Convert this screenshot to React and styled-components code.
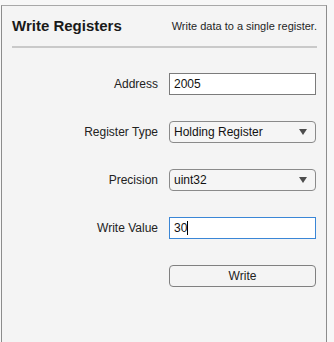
import React from "react";
import styled, { createGlobalStyle } from "styled-components";

const Global = createGlobalStyle`
  html, body { margin: 0; padding: 0; background: #f7f7f7; overflow: hidden; }
  body { font-family: "Liberation Sans", Arial, sans-serif; }
`;

const Panel = styled.div`
  box-sizing: border-box;
  margin: 5px 0 0 1px;
  width: 326px;
  height: 400px;
  background: #f4f4f4;
  border: 1px solid #8c8c8c;
  border-top-color: #a8a8a8;
`;

const Header = styled.div`
  display: flex;
  align-items: center;
  justify-content: space-between;
  margin: 0 9px 0 10px;
  height: 38px;
  padding-bottom: 2px;
  border-bottom: 2px solid #c9c9c9;
`;

const Title = styled.div`
  font-size: 15px;
  font-weight: bold;
  color: #1a1a1a;
`;

const Subtitle = styled.div`
  font-size: 11px;
  color: #1f1f1f;
  margin-top: 1px;
`;

const Form = styled.div`
  display: grid;
  grid-template-columns: 156px 147px;
  grid-auto-rows: 22px;
  column-gap: 11px;
  row-gap: 26px;
  padding-top: 25px;
`;

const Label = styled.div`
  display: flex;
  align-items: center;
  justify-content: flex-end;
  font-size: 12px;
  color: #222;
`;

const TextField = styled.div`
  box-sizing: border-box;
  display: flex;
  align-items: center;
  padding-left: 4px;
  background: #fff;
  border: 1px solid ${(p) => (p.$focused ? "#3a86d6" : "#7b7b7b")};
  font-size: 12px;
  color: #111;
`;

const Caret = styled.span`
  display: inline-block;
  width: 1px;
  height: 14px;
  background: #000;
`;

const Select = styled.div`
  box-sizing: border-box;
  display: flex;
  align-items: center;
  justify-content: space-between;
  padding: 0 8px 0 4px;
  background: #f5f5f5;
  border: 1px solid #8a8a8a;
  border-radius: 4px;
  font-size: 12px;
  color: #111;
`;

const Arrow = styled.span`
  width: 0;
  height: 0;
  border-left: 4.5px solid transparent;
  border-right: 4.5px solid transparent;
  border-top: 6px solid #4d4d4d;
`;

const Button = styled.div`
  grid-column: 2;
  box-sizing: border-box;
  display: flex;
  align-items: center;
  justify-content: center;
  background: #f4f4f4;
  border: 1px solid #808080;
  border-radius: 4px;
  font-size: 12px;
  color: #222;
`;

export default function App() {
  return (
    <>
      <Global />
      <Panel>
        <Header>
          <Title>Write Registers</Title>
          <Subtitle>Write data to a single register.</Subtitle>
        </Header>
        <Form>
          <Label>Address</Label>
          <TextField>2005</TextField>
          <Label>Register Type</Label>
          <Select>
            <span>Holding Register</span>
            <Arrow />
          </Select>
          <Label>Precision</Label>
          <Select>
            <span>uint32</span>
            <Arrow />
          </Select>
          <Label>Write Value</Label>
          <TextField $focused>
            30
            <Caret />
          </TextField>
          <Button>Write</Button>
        </Form>
      </Panel>
    </>
  );
}
